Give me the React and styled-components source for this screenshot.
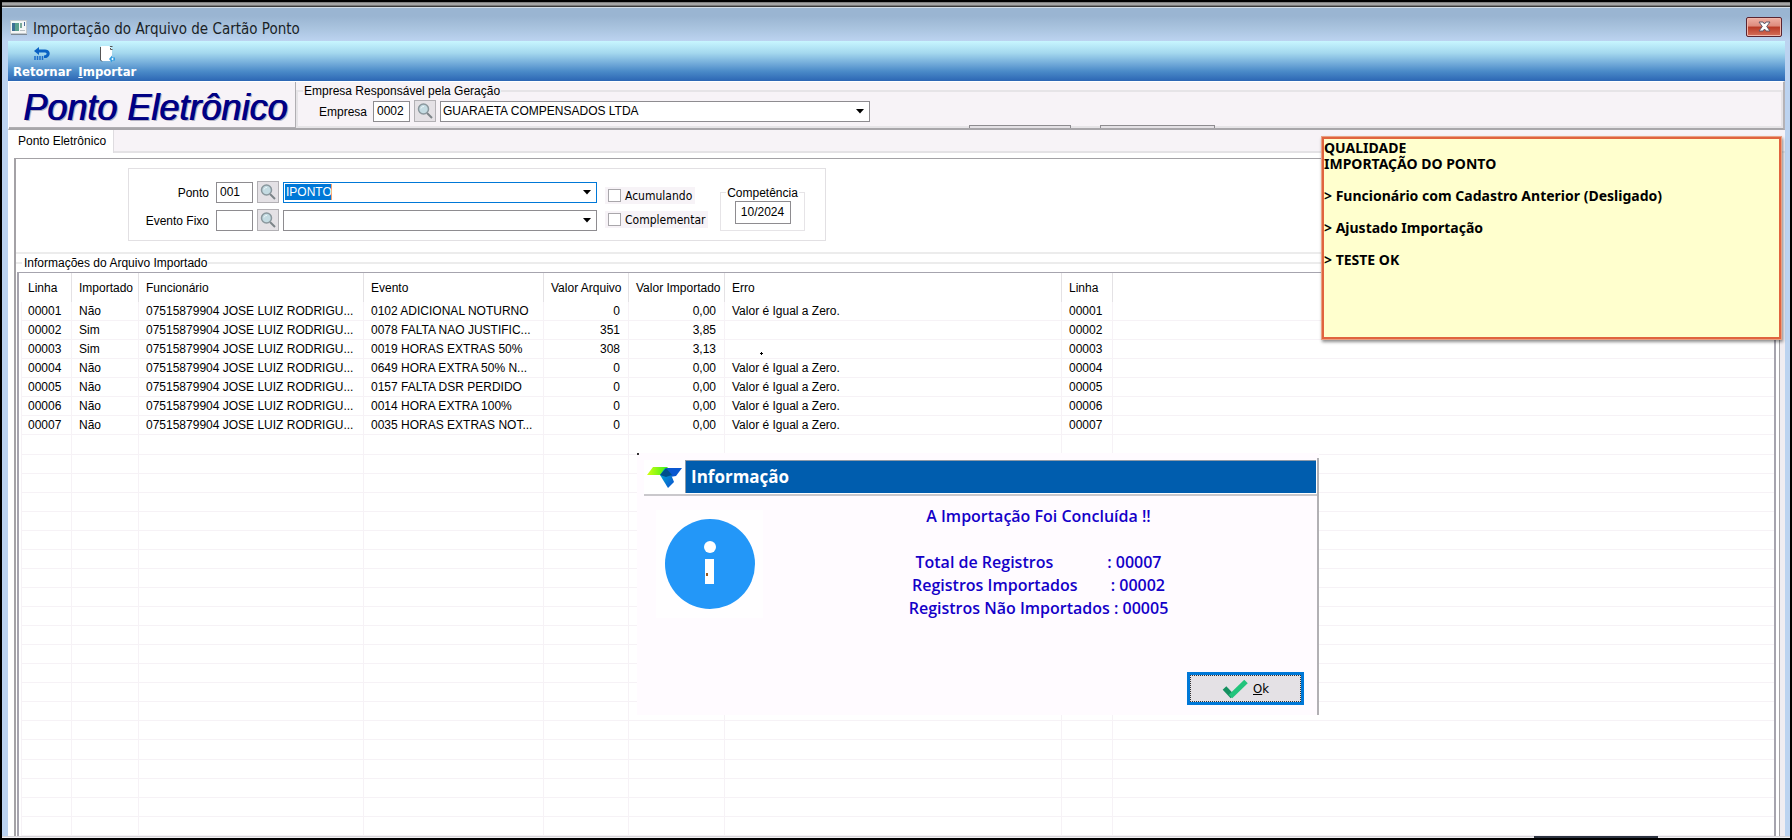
import React, { useState } from "react";
import styled, { createGlobalStyle, css } from "styled-components";

const GlobalStyle = createGlobalStyle`
  * {
    box-sizing: border-box;
  }
  body {
    margin: 0;
    background: #000;
    font-family: "Liberation Sans", Arial, sans-serif;
    font-size: 12px;
    color: #000;
  }
  button, input, select {
    font: inherit;
    color: inherit;
    margin: 0;
  }
`;

export const Screen = styled.div`
  position: relative;
  display: flex;
  flex-direction: column;
  height: 100vh;
  min-height: 760px;
  border: 2px solid #000;
  background: #bcd3f0;
`;

export const TopStrip = styled.div`
  height: 6px;
  flex: none;
  background: linear-gradient(#5a5a5a 0, #a6a6a6 1px, #a6a6a6 3px, #4a4a4a 4px, #2a2a2a 5px, #d4dde6 5px);
`;

export const TitleBar = styled.header`
  display: flex;
  align-items: center;
  justify-content: space-between;
  flex: none;
  height: 33px;
  padding: 0 8px;
  background: linear-gradient(#9ab5d2 0%, #9ab5d2 25%, #a9c3de 60%, #bcd3f0 100%);
`;

export const TitleText = styled.h1`
  display: flex;
  align-items: center;
  gap: 6px;
  margin: 0;
  padding-top: 9px;
  font-family: "DejaVu Sans Condensed", "DejaVu Sans", sans-serif;
  font-size: 15px;
  font-weight: 400;
  font-stretch: condensed;
  color: #1a1f26;
  > svg {
    margin-bottom: 4px;
  }
`;

export const CloseButton = styled.button`
  display: flex;
  align-items: center;
  justify-content: center;
  width: 36px;
  height: 20px;
  margin-top: 4px;
  padding: 0;
  border: 1px solid #5a2430;
  border-radius: 2px;
  background: linear-gradient(#efb0a4 0%, #dd8a7c 45%, #b93a26 50%, #d4705a 100%);
  box-shadow: inset 0 0 0 1px #f0b6aa;
`;

export const Toolbar = styled.nav`
  display: flex;
  flex: none;
  gap: 7px;
  height: 40px;
  margin: 0 5px 0 6px;
  padding-left: 5px;
  background: linear-gradient(#c8f6ff 0%, #a4d8ee 30%, #6fa8d8 58%, #4a8ac8 76%, #2c66b4 100%);
`;

export const ToolButton = styled.button`
  display: flex;
  flex-direction: column;
  align-items: center;
  gap: 1px;
  padding: 4px 0 0;
  border: 0;
  background: none;
  color: #fff;
  font-family: "DejaVu Sans Condensed", "DejaVu Sans", sans-serif;
  font-stretch: condensed;
  font-size: 13px;
  font-weight: 700;
  line-height: 16px;
`;

export const Client = styled.main`
  display: flex;
  flex: 1;
  flex-direction: column;
  min-height: 0;
  margin: 0 5px 0 6px;
  background: #f7f3f7;
`;

export const CompanyRow = styled.section`
  display: flex;
  flex: none;
  height: 49px;
  border: 1px solid #fff;
  border-right: 2px solid #b4b2b6;
  border-bottom: 2px solid #a8a6aa;
`;

export const Banner = styled.div`
  width: 287px;
  height: 46px;
  padding-left: 14px;
  border-right: 1px solid #b0aeb2;
  border-bottom: 1px solid #b0aeb2;
  color: #000084;
  font-size: 36px;
  font-style: italic;
  line-height: 52px;
  white-space: nowrap;
  text-shadow: 1px 0 #000084, 2px 1px #b4b2c4;
`;

export const Group = styled.fieldset`
  min-width: 0;
  margin: 0;
  padding: 0;
  border: 2px solid #e6e4e7;
`;

export const Legend = styled.legend`
  padding: 0 1px;
  line-height: 18px;
  height: 17px;
  white-space: nowrap;
`;

export const CompanyGroup = styled(Group)`
  position: relative;
  flex: 1;
  height: 46px;
  padding-left: 5px;
`;

export const CompanyFields = styled.div`
  display: flex;
  align-items: center;
  gap: 4px;
  padding: 1px 0 0 16px;
`;

export const Label = styled.label`
  width: ${(props) => props.$width}px;
  padding: 2px 3px 0 0;
  text-align: right;
  white-space: nowrap;
`;

const boxed = css`
  height: 21px;
  border: 1px solid #8e8c90;
  border-radius: 0;
  background-color: #fff;
  outline: none;
`;

export const TextInput = styled.input`
  ${boxed}
  width: ${(props) => props.$width}px;
  height: ${(props) => props.$height || 21}px;
  padding: 0 3px 1px;
  text-align: ${(props) => props.$align || "left"};
`;

export const SearchButton = styled.button`
  display: flex;
  align-items: center;
  justify-content: center;
  width: 22px;
  height: 22px;
  padding: 0;
  border: 1px solid #b2b0b4;
  background: #e4e1e5;
`;

export const ComboBox = styled.div`
  display: grid;
  width: ${(props) => props.$width}px;
  > * {
    grid-area: 1 / 1;
  }
  > svg {
    align-self: center;
    justify-self: end;
    margin-right: 6px;
    pointer-events: none;
  }
`;

export const Select = styled.select`
  ${boxed}
  width: 100%;
  padding: 0 20px 1px 2px;
  appearance: none;
  ${(props) => props.$selected && css`
    border-color: #0078d7;
    color: #fff;
    background:
      linear-gradient(#0078d7, #0078d7) 1px 1px / 46px 16px no-repeat,
      linear-gradient(#f0a070, #f0a070) 47px 1px / 1px 16px no-repeat,
      #fff;
  `}
  option {
    color: #000;
  }
`;

// tops of the buttons hidden behind the header group
export const HiddenButtons = styled.div`
  position: absolute;
  bottom: -2px;
  left: 671px;
  display: flex;
  gap: 29px;
`;

export const ButtonTop = styled.div`
  width: ${(props) => props.$width}px;
  height: 3px;
  border: 1px solid #8e8c90;
  border-bottom: 0;
  background: #e4e1e5;
`;

export const Tabs = styled.div`
  display: flex;
  flex: none;
  height: 23px;
`;

export const Tab = styled.button`
  width: 106px;
  padding: 0 0 2px 10px;
  border: 0;
  border-right: 1px solid #dedce0;
  background: #fff;
  text-align: left;
  white-space: nowrap;
`;

export const TabLine = styled.div`
  flex: 1;
  border-bottom: 2px solid #e4e2e5;
`;

export const TabBody = styled.div`
  display: flex;
  flex: 1;
  flex-direction: column;
  min-height: 0;
  padding: 5px 0 0 6px;
  background: #fff;
  border-right: 5px solid #f1edf1;
`;

export const Page = styled.div`
  display: flex;
  flex: 1;
  flex-direction: column;
  min-height: 0;
  border: solid #a4a2a6;
  border-width: 1px 1px 0 2px;
`;

export const Filters = styled.section`
  flex: none;
  height: 95px;
  padding: 9px 0 0 112px;
  border-bottom: 2px solid #ececec;
`;

export const FilterBox = styled.div`
  display: flex;
  width: 698px;
  height: 73px;
  padding: 12px 0 0 16px;
  border: 1px solid #e2e0e3;
`;

export const FilterRows = styled.div`
  display: flex;
  flex-direction: column;
  gap: 6px;
`;

export const FilterRow = styled.div`
  display: flex;
  align-items: center;
  gap: 4px;
`;

export const Checks = styled.div`
  display: flex;
  flex-direction: column;
  align-items: flex-start;
  gap: 7px;
  margin: 6px 16px 0 8px;
  width: 99px;
`;

export const CheckLabel = styled.label`
  display: flex;
  align-items: center;
  gap: 4px;
  height: 17px;
  padding: 0 3px;
  background: #f7f3f7;
  font-family: "DejaVu Sans Condensed", "DejaVu Sans", sans-serif;
  font-stretch: condensed;
`;

export const CheckBox = styled.input`
  appearance: none;
  width: 13px;
  height: 13px;
  border: 1px solid #a9a7ab;
  background: #fff;
`;

export const PeriodGroup = styled(Group)`
  width: 85px;
  height: 47px;
  margin-top: 3px;
  border-width: 1px;
  text-align: center;
`;

export const ListGroup = styled.section`
  display: flex;
  flex: 1;
  flex-direction: column;
  min-height: 0;
`;

export const ListTitle = styled.h2`
  display: flex;
  align-items: center;
  margin: 0;
  height: 18px;
  font-size: 12px;
  font-weight: 400;
  white-space: nowrap;
  &::before, &::after {
    content: "";
    width: 6px;
    height: 2px;
    margin-right: 2px;
    background: #ececec;
  }
  &::after {
    flex: 1;
    margin: 0 0 0 1px;
  }
`;

export const ListBox = styled.div`
  flex: 1;
  min-height: 0;
  overflow: hidden;
  margin: 0 3px 0 1px;
  padding-left: 2px;
  border: 2px solid #a6a4ae;
  border-top-width: 1px;
  border-bottom: 0;
`;

export const Table = styled.table`
  width: 100%;
  height: 100%;
  table-layout: fixed;
  border-collapse: separate;
  border-spacing: 0;
  line-height: 18px;
  white-space: nowrap;
  th {
    height: 29px;
    padding: 0 0 0 7px;
    border-right: 1px solid #e4e2e5;
    font-weight: 400;
    text-align: left;
  }
  td {
    padding: 0 0 0 7px;
    border: 0 solid #f6f2f6;
    border-width: 0 1px 1px 0;
  }
  td:first-child {
    padding-left: 6px;
    border-left-width: 1px;
  }
  th:last-child, td:last-child {
    border-right: 0;
  }
`;

export const NumberCell = styled.td`
  && {
    padding-right: 8px;
    text-align: right;
  }
`;

export const Speck = styled.svg`
  display: block;
  margin: 8px 0 0 28px;
`;

export const BottomEdge = styled.footer`
  display: flex;
  justify-content: flex-end;
  flex: none;
  height: 2px;
  padding-right: 132px;
  background: linear-gradient(#d6d4d8 50%, #f1eff2 50%);
`;

export const BottomMark = styled.div`
  width: 124px;
  background: #2c3340;
`;

export const Note = styled.aside`
  position: absolute;
  top: 134px;
  right: 8px;
  width: 461px;
  height: 204px;
  padding: 1px 0 0 0;
  border: 3px solid #e0643f;
  outline: 1px solid #e9a083;
  outline-offset: -1px;
  box-shadow: 1px 2px 3px rgba(0, 0, 0, 0.45);
  background: #ffffce;
  font-family: "Noto Sans", "Open Sans", sans-serif;
  font-size: 14px;
  font-weight: 700;
  line-height: 16px;
  white-space: pre-line;
`;

export const Dialog = styled.section`
  position: absolute;
  top: 451px;
  left: 635px;
  width: 682px;
  height: 262px;
  display: flex;
  flex-direction: column;
  padding: 5px 0 0 7px;
  background: #fffbff;
`;

export const DialogSpeck = styled.svg`
  position: absolute;
  top: 0;
  left: 0;
`;

export const DialogFrame = styled.div`
  display: flex;
  flex: 1;
  flex-direction: column;
  padding-top: 2px;
  border-right: 2px solid #b2b0b4;
`;

export const DialogHead = styled.div`
  display: flex;
  height: 36px;
  border-bottom: 2px solid #cac8cc;
  background: #fff;
`;

export const DialogTitle = styled.h2`
  flex: 1;
  margin: 0 1px 1px 1px;
  padding-left: 5px;
  border-top: 1px solid #8d9aa8;
  border-left: 1px solid #8d9aa8;
  background: #005dae;
  color: #fff;
  font-family: "Open Sans", "Noto Sans", sans-serif;
  font-size: 17px;
  font-weight: 700;
  line-height: 32px;
`;

export const DialogBody = styled.div`
  display: flex;
  flex: 1;
`;

export const InfoPicture = styled.div`
  display: flex;
  align-items: center;
  justify-content: center;
  width: 107px;
  height: 108px;
  margin: 14px 0 0 12px;
  background: #fffeff;
`;

export const Message = styled.p`
  flex: 1;
  margin: 9px 0 0;
  padding-right: 3px;
  color: #1400c8;
  font-family: "Open Sans", "Noto Sans", sans-serif;
  font-size: 16px;
  font-weight: 600;
  line-height: 23px;
  text-align: center;
  white-space: pre;
`;

export const DialogFoot = styled.div`
  display: flex;
  justify-content: flex-end;
  padding: 0 13px 10px 0;
`;

export const OkButton = styled.button`
  display: flex;
  align-items: center;
  justify-content: center;
  gap: 5px;
  width: 117px;
  height: 33px;
  padding: 0;
  border: 3px solid #0078d7;
  outline: 1px dotted #333;
  outline-offset: -4px;
  background: #e4e1e5;
  font-family: "DejaVu Sans Condensed", "DejaVu Sans", sans-serif;
  font-stretch: condensed;
  font-size: 13px;
`;


const columns = [
  { title: "Linha", width: 51 },
  { title: "Importado", width: 67 },
  { title: "Funcionário", width: 225 },
  { title: "Evento", width: 180 },
  { title: "Valor Arquivo", width: 85 },
  { title: "Valor Importado", width: 96 },
  { title: "Erro", width: 337 },
  { title: "Linha", width: 51 },
];

const zero = "Valor é Igual a Zero.";
const employee = "07515879904 JOSE LUIZ RODRIGU...";

const data = [
  { linha: "00001", importado: "Não", evento: "0102 ADICIONAL NOTURNO", arquivo: "0", valor: "0,00", erro: zero },
  { linha: "00002", importado: "Sim", evento: "0078 FALTA NAO JUSTIFIC...", arquivo: "351", valor: "3,85" },
  { linha: "00003", importado: "Sim", evento: "0019 HORAS EXTRAS 50%", arquivo: "308", valor: "3,13", speck: true },
  { linha: "00004", importado: "Não", evento: "0649 HORA EXTRA 50% N...", arquivo: "0", valor: "0,00", erro: zero },
  { linha: "00005", importado: "Não", evento: "0157 FALTA DSR PERDIDO", arquivo: "0", valor: "0,00", erro: zero },
  { linha: "00006", importado: "Não", evento: "0014 HORA EXTRA 100%", arquivo: "0", valor: "0,00", erro: zero },
  { linha: "00007", importado: "Não", evento: "0035 HORAS EXTRAS NOT...", arquivo: "0", valor: "0,00", erro: zero },
];

const emptyRows = Array.from({ length: 21 }, (_, key) => key);

const noteText = `QUALIDADE
IMPORTAÇÃO DO PONTO

> Funcionário com Cadastro Anterior (Desligado)

> Ajustado Importação

> TESTE OK`;

const messageText = [
  "A Importação Foi Concluída !!",
  "",
  "Total de Registros             : 00007",
  "Registros Importados        : 00002",
  "Registros Não Importados : 00005",
].join("\n");


const WindowIcon = () => (
  <svg width="17" height="15" viewBox="0 0 17 15">
    <rect x="0.5" y="0.5" width="16" height="13" fill="#f4f6f6" stroke="#c2c8cc" />
    <path d="M1 14.500h16" stroke="#7c8894" />
    <rect x="2" y="3" width="7" height="8" fill="#5c9f8e" />
    <rect x="2" y="3" width="3" height="8" fill="#3d6f95" />
    <rect x="10" y="3" width="2" height="5" fill="#7da99a" />
    <rect x="14" y="2" width="1" height="4" fill="#4a6a9a" />
    <rect x="10" y="10" width="5" height="1" fill="#b8c0c4" />
  </svg>
);

const CloseIcon = () => (
  <svg width="13" height="11" viewBox="0 0 13 11">
    <path d="M1 1h4l1.500 2L8 1h4L8.700 5.500 12 10H8L6.500 8 5 10H1l3.300-4.500z" fill="#fff" stroke="#5c5668" />
  </svg>
);

const ReturnIcon = () => (
  <svg width="18" height="18" viewBox="0 0 18 18">
    <path d="M1 6l5-4v2.500h6c5 0 6 5 3 7.500-1 1-2 1-4 1v-2.500c3 0 3.500-3 1-3H6V10z" fill="#0b62c4" />
    <path d="M2 11v4M4.500 11v4M7 11v4M9.500 11v4" stroke="#1c6cc8" strokeWidth="1.500" />
  </svg>
);

const ImportIcon = () => (
  <svg width="18" height="18" viewBox="0 0 18 18">
    <path d="M3 1h8l3 3v12H4l-1-1z" fill="#fff" />
    <path d="M2.500 2v13l1.500 1.500" fill="none" stroke="#555" />
    <path d="M12 1.500h2.500M12.500 3v1.500h2" fill="none" stroke="#555" />
    <path d="M11 14l3-3.500v2h3v3h-3v2z" fill="#2f9be0" />
    <circle cx="14.500" cy="14" r="1" fill="#fff" />
  </svg>
);

const SearchIcon = () => (
  <svg width="18" height="18" viewBox="0 0 18 18">
    <path d="M11 11l5 5" stroke="#7c8488" strokeWidth="2" />
    <circle cx="7.500" cy="7" r="5" fill="#c4dbe2" stroke="#8a979d" strokeWidth="1.500" />
    <path d="M5 6.500c.4-1.500 1.500-2 3-2" fill="none" stroke="#eef6f8" />
  </svg>
);

const ArrowIcon = () => (
  <svg width="8" height="5" viewBox="0 0 8 5">
    <path d="M0 0h8L4 4.500z" fill="#000" />
  </svg>
);

const BrandIcon = () => (
  <svg width="40" height="32" viewBox="0 0 40 32">
    <defs>
      <linearGradient id="green">
        <stop offset="0" stopColor="#d4ff10" />
        <stop offset="1" stopColor="#38f01c" />
      </linearGradient>
      <linearGradient id="blue" x1="0" y1="0" x2="1" y2="1">
        <stop offset="0" stopColor="#00b4d0" />
        <stop offset="1" stopColor="#0b4fd0" />
      </linearGradient>
    </defs>
    <path d="M9 7h15l-7 8H3z" fill="url(#green)" />
    <path d="M22 8h16l-6 8-6 1z" fill="#0a58d0" />
    <path d="M16 15l5-7 7 9 2 5-6 6z" fill="url(#blue)" />
    <path d="M22 8l-6 7 6 2 6-2z" fill="#00508c" />
  </svg>
);

const InfoIcon = () => (
  <svg width="90" height="90" viewBox="0 0 90 90">
    <circle cx="45" cy="45" r="45" fill="#2397f8" />
    <circle cx="45" cy="28" r="6" fill="#fff" />
    <rect x="40" y="40" width="9" height="25" fill="#fff" />
    <rect x="41" y="54" width="2" height="3" fill="#9a5a20" />
  </svg>
);

const OkIcon = () => (
  <svg width="26" height="20" viewBox="0 0 26 20">
    <path d="M2.500 9l8 8.500" stroke="#159060" strokeWidth="5" />
    <path d="M8.500 17.500L24 2.500" fill="none" stroke="#22c47c" strokeWidth="5" />
  </svg>
);

const App = () => {
  const [ponto, setPonto] = useState("001");
  const [evento, setEvento] = useState("");
  const [empresa, setEmpresa] = useState("0002");
  const [competencia, setCompetencia] = useState("10/2024");

  return (
    <Screen>
      <GlobalStyle />
      <TopStrip />
      <TitleBar>
        <TitleText><WindowIcon />Importação do Arquivo de Cartão Ponto</TitleText>
        <CloseButton aria-label="Fechar"><CloseIcon /></CloseButton>
      </TitleBar>
      <Toolbar>
        <ToolButton><ReturnIcon />Retornar</ToolButton>
        <ToolButton><ImportIcon /><span><u>I</u>mportar</span></ToolButton>
      </Toolbar>

      <Client>
        <CompanyRow>
          <Banner>Ponto Eletrônico</Banner>
          <CompanyGroup>
            <Legend>Empresa Responsável pela Geração</Legend>
            <CompanyFields>
              <Label htmlFor="empresa" $width={50}>Empresa</Label>
              <TextInput id="empresa" $width={37} value={empresa} onChange={(e) => setEmpresa(e.target.value)} />
              <SearchButton aria-label="Pesquisar empresa"><SearchIcon /></SearchButton>
              <ComboBox $width={430}>
                <Select aria-label="Nome da empresa">
                  <option>GUARAETA COMPENSADOS LTDA</option>
                </Select>
                <ArrowIcon />
              </ComboBox>
            </CompanyFields>
            <HiddenButtons>
              <ButtonTop $width={102} />
              <ButtonTop $width={115} />
            </HiddenButtons>
          </CompanyGroup>
        </CompanyRow>

        <Tabs>
          <Tab>Ponto Eletrônico</Tab>
          <TabLine />
        </Tabs>

        <TabBody>
          <Page>
            <Filters>
              <FilterBox>
                <FilterRows>
                  <FilterRow>
                    <Label htmlFor="ponto" $width={67}>Ponto</Label>
                    <TextInput id="ponto" $width={37} value={ponto} onChange={(e) => setPonto(e.target.value)} />
                    <SearchButton aria-label="Pesquisar ponto"><SearchIcon /></SearchButton>
                    <ComboBox $width={314}>
                      <Select $selected aria-label="Nome do ponto">
                        <option>IPONTO</option>
                      </Select>
                      <ArrowIcon />
                    </ComboBox>
                  </FilterRow>
                  <FilterRow>
                    <Label htmlFor="evento" $width={67}>Evento Fixo</Label>
                    <TextInput id="evento" $width={37} value={evento} onChange={(e) => setEvento(e.target.value)} />
                    <SearchButton aria-label="Pesquisar evento"><SearchIcon /></SearchButton>
                    <ComboBox $width={314}>
                      <Select aria-label="Nome do evento">
                        <option></option>
                      </Select>
                      <ArrowIcon />
                    </ComboBox>
                  </FilterRow>
                </FilterRows>
                <Checks>
                  <CheckLabel><CheckBox type="checkbox" />Acumulando</CheckLabel>
                  <CheckLabel><CheckBox type="checkbox" />Complementar</CheckLabel>
                </Checks>
                <PeriodGroup>
                  <Legend>Competência</Legend>
                  <TextInput
                    aria-label="Competência"
                    $width={56}
                    $height={23}
                    $align="center"
                    value={competencia}
                    onChange={(e) => setCompetencia(e.target.value)}
                  />
                </PeriodGroup>
              </FilterBox>
            </Filters>

            <ListGroup>
              <ListTitle>Informações do Arquivo Importado</ListTitle>
              <ListBox>
                <Table>
                  <colgroup>
                    {columns.map((column, key) => <col key={key} width={column.width} />)}
                    <col />
                  </colgroup>
                  <thead>
                    <tr>
                      {columns.map((column, key) => <th key={key}>{column.title}</th>)}
                      <th></th>
                    </tr>
                  </thead>
                  <tbody>
                    {data.map((item) => (
                      <tr key={item.linha}>
                        <td>{item.linha}</td>
                        <td>{item.importado}</td>
                        <td>{employee}</td>
                        <td>{item.evento}</td>
                        <NumberCell>{item.arquivo}</NumberCell>
                        <NumberCell>{item.valor}</NumberCell>
                        <td>
                          {item.erro}
                          {item.speck && <Speck width="3" height="3"><path d="M1 0h1v1h1v1H2v1H1V2H0V1h1z" /></Speck>}
                        </td>
                        <td>{item.linha}</td>
                        <td></td>
                      </tr>
                    ))}
                    {emptyRows.map((key) => (
                      <tr key={key}>
                        <td>&nbsp;</td>
                        <td></td>
                        <td></td>
                        <td></td>
                        <td></td>
                        <td></td>
                        <td></td>
                        <td></td>
                        <td></td>
                      </tr>
                    ))}
                  </tbody>
                </Table>
              </ListBox>
            </ListGroup>
          </Page>
        </TabBody>
      </Client>
      <BottomEdge><BottomMark /></BottomEdge>

      <Note>{noteText}</Note>

      <Dialog role="dialog" aria-labelledby="dialog-title">
        <DialogSpeck width="2" height="2"><rect width="2" height="2" fill="#333" /></DialogSpeck>
        <DialogFrame>
          <DialogHead>
            <BrandIcon />
            <DialogTitle id="dialog-title">Informação</DialogTitle>
          </DialogHead>
          <DialogBody>
            <InfoPicture><InfoIcon /></InfoPicture>
            <Message>{messageText}</Message>
          </DialogBody>
          <DialogFoot>
            <OkButton><OkIcon /><span><u>O</u>k</span></OkButton>
          </DialogFoot>
        </DialogFrame>
      </Dialog>
    </Screen>
  );
}

export default App;
